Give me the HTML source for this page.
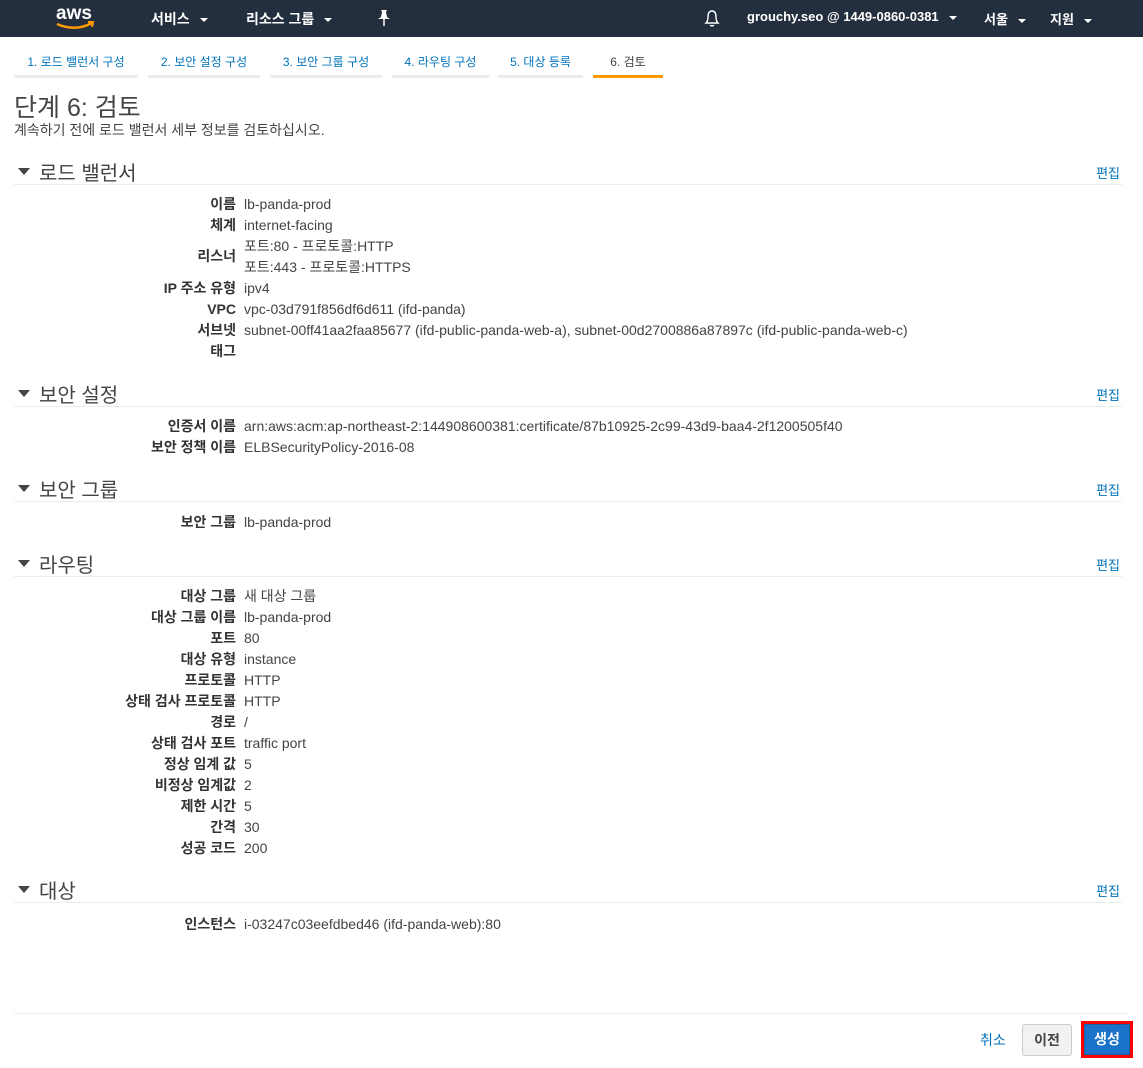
<!DOCTYPE html>
<html><head><meta charset="utf-8"><style>
*{margin:0;padding:0;box-sizing:border-box}
body{width:1143px;height:1068px;background:#fff;font-family:"Liberation Sans","Noto Sans CJK KR",sans-serif;color:#444;position:relative;overflow:hidden;font-size:14px}
.nav{position:absolute;left:0;top:0;width:1143px;height:37px;background:#232f3e;color:#fff;font-weight:bold}
.nav span{position:absolute;top:9px;font-size:14px}
.car{display:inline-block;width:0;height:0;border-left:4px solid transparent;border-right:4px solid transparent;border-top:4px solid #fff;margin-left:10px;vertical-align:middle}
.tab{position:absolute;top:54px;height:24px;border-bottom:3px solid #eaeded;color:#0073bb;font-size:12px;text-align:center;line-height:16px}
.tab.on{border-color:#f90;color:#444}
.h{position:absolute;left:14px;width:1108px;height:28px;border-bottom:1px solid #eaeded}
.h b{position:absolute;left:25px;top:0;font-weight:normal;font-size:20px;color:#444}
.h i{position:absolute;left:4px;top:11px;width:0;height:0;border-left:6px solid transparent;border-right:6px solid transparent;border-top:7px solid #444}
.h a{position:absolute;right:2px;top:6px;color:#0073bb;font-size:13px;text-decoration:none}
.r{position:absolute;left:0;width:1143px;height:21px;line-height:21px}
.r .l{position:absolute;right:907px;font-weight:bold;color:#333}
.r .v{position:absolute;left:244px;color:#444}
</style></head><body>
<div class="nav">
<svg style="position:absolute;left:55px;top:3px" width="42" height="28" viewBox="0 0 42 28"><text x="1" y="16" fill="#fff" font-family="Liberation Sans" font-size="19" font-weight="bold">aws</text><path d="M2 21 Q20 29 37 20" stroke="#f90" stroke-width="2.5" fill="none"/><path d="M33 19 L38 19 L37 24" stroke="#f90" stroke-width="2" fill="none"/></svg>
<span style="left:151px">서비스<i class="car"></i></span>
<span style="left:246px">리소스 그룹<i class="car"></i></span>
<svg style="position:absolute;left:376px;top:9px" width="16" height="18" viewBox="0 0 16 18"><path d="M5 1 L11 1 L10 3 L11 8 L14 10 L2 10 L5 8 L6 3 Z" fill="#fff"/><path d="M8 10 L8 17" stroke="#fff" stroke-width="1.5"/></svg>
<svg style="position:absolute;left:703px;top:9px" width="18" height="19" viewBox="0 0 18 19"><path d="M3 14 Q5 12 5 8 Q5 2 9 2 Q13 2 13 8 Q13 12 15 14 Z" stroke="#fff" stroke-width="1.4" fill="none"/><path d="M7 16 Q9 18 11 16" stroke="#fff" stroke-width="1.4" fill="none"/></svg>
<span style="left:747px;font-size:13px">grouchy.seo @ 1449-0860-0381<i class="car"></i></span>
<span style="left:984px;font-size:13px">서울<i class="car"></i></span>
<span style="left:1050px;font-size:13px">지원<i class="car"></i></span>
</div>
<div class="tab" style="left:14px;width:124px">1. 로드 밸런서 구성</div>
<div class="tab" style="left:148px;width:112px">2. 보안 설정 구성</div>
<div class="tab" style="left:270px;width:112px">3. 보안 그룹 구성</div>
<div class="tab" style="left:392px;width:97px">4. 라우팅 구성</div>
<div class="tab" style="left:498px;width:85px">5. 대상 등록</div>
<div class="tab on" style="left:593px;width:70px">6. 검토</div>
<div style="position:absolute;left:14px;top:88px;font-size:25px;color:#444">단계 6: 검토</div>
<div style="position:absolute;left:14px;top:120px;font-size:14px">계속하기 전에 로드 밸런서 세부 정보를 검토하십시오.</div>

<div class="h" style="top:157px"><i></i><b>로드 밸런서</b><a>편집</a></div>
<div class="r" style="top:194px"><span class="l">이름</span><span class="v">lb-panda-prod</span></div>
<div class="r" style="top:215px"><span class="l">체계</span><span class="v">internet-facing</span></div>
<div class="r" style="top:246px"><span class="l">리스너</span></div>
<div class="r" style="top:236px"><span class="v">포트:80 - 프로토콜:HTTP</span></div>
<div class="r" style="top:257px"><span class="v">포트:443 - 프로토콜:HTTPS</span></div>
<div class="r" style="top:278px"><span class="l">IP 주소 유형</span><span class="v">ipv4</span></div>
<div class="r" style="top:299px"><span class="l">VPC</span><span class="v">vpc-03d791f856df6d611 (ifd-panda)</span></div>
<div class="r" style="top:320px"><span class="l">서브넷</span><span class="v">subnet-00ff41aa2faa85677 (ifd-public-panda-web-a), subnet-00d2700886a87897c (ifd-public-panda-web-c)</span></div>
<div class="r" style="top:341px"><span class="l">태그</span></div>

<div class="h" style="top:379px"><i></i><b>보안 설정</b><a>편집</a></div>
<div class="r" style="top:416px"><span class="l">인증서 이름</span><span class="v">arn:aws:acm:ap-northeast-2:144908600381:certificate/87b10925-2c99-43d9-baa4-2f1200505f40</span></div>
<div class="r" style="top:437px"><span class="l">보안 정책 이름</span><span class="v">ELBSecurityPolicy-2016-08</span></div>

<div class="h" style="top:474px"><i></i><b>보안 그룹</b><a>편집</a></div>
<div class="r" style="top:512px"><span class="l">보안 그룹</span><span class="v">lb-panda-prod</span></div>

<div class="h" style="top:549px"><i></i><b>라우팅</b><a>편집</a></div>
<div class="r" style="top:586px"><span class="l">대상 그룹</span><span class="v">새 대상 그룹</span></div>
<div class="r" style="top:607px"><span class="l">대상 그룹 이름</span><span class="v">lb-panda-prod</span></div>
<div class="r" style="top:628px"><span class="l">포트</span><span class="v">80</span></div>
<div class="r" style="top:649px"><span class="l">대상 유형</span><span class="v">instance</span></div>
<div class="r" style="top:670px"><span class="l">프로토콜</span><span class="v">HTTP</span></div>
<div class="r" style="top:691px"><span class="l">상태 검사 프로토콜</span><span class="v">HTTP</span></div>
<div class="r" style="top:712px"><span class="l">경로</span><span class="v">/</span></div>
<div class="r" style="top:733px"><span class="l">상태 검사 포트</span><span class="v">traffic port</span></div>
<div class="r" style="top:754px"><span class="l">정상 임계 값</span><span class="v">5</span></div>
<div class="r" style="top:775px"><span class="l">비정상 임계값</span><span class="v">2</span></div>
<div class="r" style="top:796px"><span class="l">제한 시간</span><span class="v">5</span></div>
<div class="r" style="top:817px"><span class="l">간격</span><span class="v">30</span></div>
<div class="r" style="top:838px"><span class="l">성공 코드</span><span class="v">200</span></div>

<div class="h" style="top:875px"><i></i><b>대상</b><a>편집</a></div>
<div class="r" style="top:914px"><span class="l">인스턴스</span><span class="v">i-03247c03eefdbed46 (ifd-panda-web):80</span></div>

<div style="position:absolute;left:14px;top:1013px;width:1115px;border-top:1px solid #eaeded"></div>
<div style="position:absolute;left:980px;top:1030px;color:#0073bb;font-size:14px">취소</div>
<div style="position:absolute;left:1022px;top:1024px;width:50px;height:32px;border:1px solid #ccc;border-radius:3px;background:#f2f2f2;font-weight:bold;color:#444;text-align:center;line-height:30px">이전</div>
<div style="position:absolute;left:1081px;top:1021px;width:52px;height:37px;border:3px solid #f00;background:#1a73c8;color:#fff;font-weight:bold;text-align:center;line-height:31px;box-shadow:inset 0 0 0 1px #1660a8">생성</div>
</body></html>
